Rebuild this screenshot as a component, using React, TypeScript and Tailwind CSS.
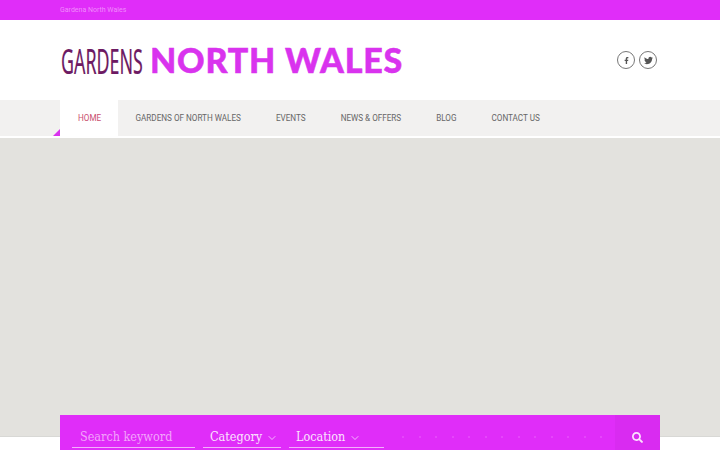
import React from "react";
import { FaFacebookF, FaTwitter, FaSearch } from "react-icons/fa";
import { ChevronDown } from "lucide-react";

const NAV = ["HOME", "GARDENS OF NORTH WALES", "EVENTS", "NEWS & OFFERS", "BLOG", "CONTACT US"];

function Social({ children }: { children: React.ReactNode }) {
  return (
    <div className="w-[18px] h-[18px] rounded-full border border-[#777] flex items-center justify-center text-[#555]">
      {children}
    </div>
  );
}

function Select({ label, width }: { label: string; width: string }) {
  return (
    <div className={`${width} h-[25px] pt-[5px] border-b border-[#f3b0fb] flex items-center pl-[7px] gap-1 text-[#fbe3fd] text-[12.5px]`}>
      <span>{label}</span>
      <ChevronDown size={12} strokeWidth={1.5} />
    </div>
  );
}

export default function App() {
  return (
    <div className="w-[720px] h-[450px] overflow-hidden relative bg-white font-['Roboto',sans-serif]">
      <div className="h-5 bg-[#e02df9]">
        <div className="w-[600px] mx-auto text-[7px] leading-[20px] text-[#f08bfc]">Gardena North Wales</div>
      </div>

      <div className="h-20 bg-white">
        <div className="w-[600px] h-full mx-auto flex items-center justify-between">
          <div className="flex items-center whitespace-nowrap">
            <span className="w-[90px] pl-[2px] text-[35px] leading-none text-[#6d1a63] font-['Noto_Sans',sans-serif] origin-left scale-x-[0.51] inline-block [-webkit-text-stroke:0.2px_#6d1a63]">
              GARDENS
            </span>
            <span className="text-[34px] leading-none font-black tracking-[0.8px] text-[#d933ee] font-['Lato',sans-serif] [-webkit-text-stroke:0.5px_#d933ee]">
              NORTH WALES
            </span>
          </div>
          <div className="flex gap-1 mr-[3px]">
            <Social><FaFacebookF size={7} /></Social>
            <Social><FaTwitter size={9} /></Social>
          </div>
        </div>
      </div>

      <div className="h-9 bg-[#f2f1f0]">
        <div className="w-[600px] h-full mx-auto flex relative text-[8.15px] text-[#666]">
          {NAV.map((item, i) => (
            <div
              key={item}
              className={
                i === 0
                  ? "h-full w-[58px] pl-[18px] pt-[1px] flex items-center bg-white text-[#c9506e]"
                  : "h-full px-[17.5px] pt-[1px] flex items-center"
              }
            >
              {item}
            </div>
          ))}
          <div className="absolute left-[-7px] bottom-0 w-0 h-0 border-l-[7px] border-l-transparent border-b-[7px] border-b-[#d933ee]" />
        </div>
      </div>

      <div className="h-[2px] bg-white" />

      <div className="h-[299px] bg-[#e3e2de] border-b border-[#d8d8d5]" />

      <div className="absolute left-[60px] top-[415px] w-[600px] h-[35px] bg-[#e02df9] flex font-['DejaVu_Serif_Condensed','DejaVu_Serif',serif]">
        <div className="flex-1 flex items-start pt-[8px] pl-[12px] gap-[8px]">
          <div className="w-[123px] h-[25px] pt-[5px] border-b border-[#f3b0fb] flex items-center pl-[8px] text-[12.5px] text-[#f3a4fb]">
            Search keyword
          </div>
          <Select label="Category" width="w-[78px]" />
          <Select label="Location" width="w-[95px]" />
          <div className="flex gap-[14.5px] ml-[10px] mt-[13px]">
            {Array.from({ length: 13 }).map((_, i) => (
              <div key={i} className="w-[2px] h-[2px] rounded-full bg-[#e84efa]" />
            ))}
          </div>
        </div>
        <div className="w-[45px] bg-[#d92bf1] flex items-center justify-center text-[#fbe3fd] pt-[9px]">
          <FaSearch size={11} />
        </div>
      </div>
    </div>
  );
}
